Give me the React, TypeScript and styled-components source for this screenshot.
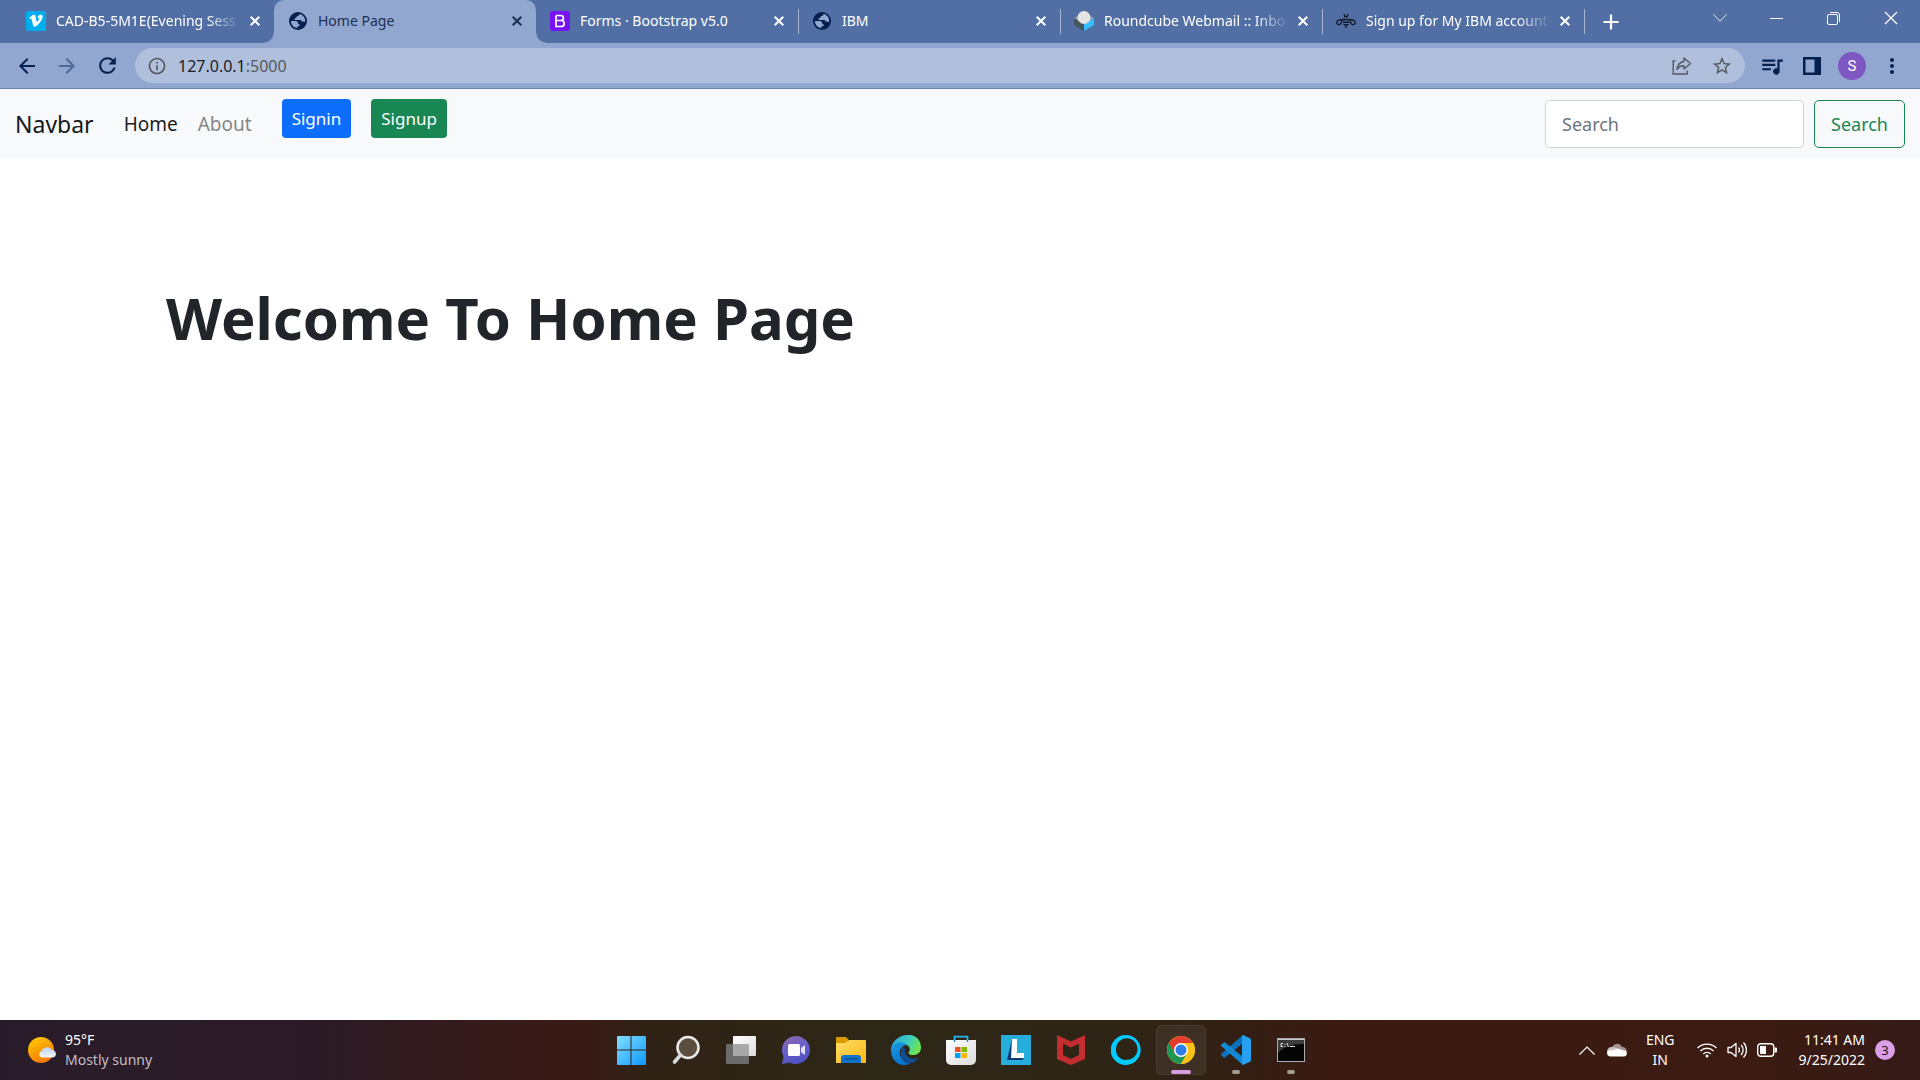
import React from "react";
import styled, { createGlobalStyle } from "styled-components";
import { MdArrowBack, MdArrowForward, MdRefresh, MdInfoOutline, MdStarBorder, MdQueueMusic, MdMoreVert } from "react-icons/md";

const GlobalStyle = createGlobalStyle`
  *, *::before, *::after { box-sizing: border-box; }
  body { margin: 0; background: #fff; }
  body, button, input { font-family: "Noto Sans", "Open Sans", sans-serif; }
  button { border: 0; padding: 0; background: none; color: inherit; cursor: pointer; }
  svg { display: block; flex: none; }
`;

const Screen = styled.div`
  min-height: 100vh;
  display: flex;
  flex-direction: column;
`;

/* ---------- browser ---------- */

const TabStrip = styled.div`
  display: flex;
  align-items: center;
  height: 43px;
  padding-left: 12px;
  background: #516fa4;
  color: #fff;
`;

const Tab = styled.div<{ $active?: boolean; $divider?: boolean }>`
  position: relative;
  flex: 0 1 262px;
  min-width: 0;
  height: 100%;
  display: flex;
  align-items: center;
  gap: 4px;
  padding: 0 9px 1px 14px;
  border-radius: 10px 10px 0 0;
  background: ${(p) => (p.$active ? "#92a7d0" : "transparent")};
  color: ${(p) => (p.$active ? "#1d2f50" : "#fff")};

  &::before,
  &::after {
    content: "";
    position: absolute;
    bottom: 0;
    width: 10px;
    height: 10px;
    display: ${(p) => (p.$active ? "block" : "none")};
  }
  &::before {
    left: -10px;
    background: radial-gradient(circle at 0 0, transparent 9px, #92a7d0 10px);
  }
  &::after {
    right: -10px;
    background: radial-gradient(circle at 100% 0, transparent 9px, #92a7d0 10px);
  }
  ${(p) =>
    p.$divider &&
    `&::after {
      display: block;
      right: -1px;
      bottom: 9px;
      width: 1px;
      height: 25px;
      background: #a5b4d1;
    }`}
`;

const TabTitle = styled.button<{ $fade?: boolean }>`
  flex: 1;
  min-width: 0;
  height: 28px;
  display: flex;
  align-items: center;
  gap: 10px;
  overflow: hidden;
  white-space: nowrap;
  font-size: 14px;
  line-height: 20px;
  mask-image: ${(p) => (p.$fade ? "linear-gradient(90deg, #000 84%, transparent 100%)" : "none")};
`;

const TabClose = styled.button`
  width: 20px;
  height: 20px;
  display: grid;
  place-items: center;
`;

const NewTab = styled.button`
  width: 36px;
  height: 36px;
  margin-left: 9px;
  display: grid;
  place-items: center;
`;

const WindowControls = styled.div`
  align-self: flex-start;
  display: flex;
  height: 36px;
  margin-left: auto;
  padding-right: 1px;
`;

const WindowButton = styled.button`
  width: 57px;
  display: grid;
  place-items: center;
`;

const Toolbar = styled.div`
  display: flex;
  align-items: center;
  height: 46px;
  padding: 0 8px 0 7px;
  background: #92a7d0;
  border-bottom: 1px solid #6a84b5;
  color: #04204f;
`;

const ToolButton = styled.button<{ $dim?: boolean }>`
  width: 40px;
  height: 36px;
  display: grid;
  place-items: center;
  opacity: ${(p) => (p.$dim ? 0.45 : 1)};
`;

const AddressBar = styled.form`
  flex: 1;
  height: 35px;
  margin: 0 7px 0 8px;
  padding: 0 3px 0 12px;
  display: flex;
  align-items: center;
  border-radius: 18px;
  background: #afbfdc;
  color: #56595e;
`;

const Address = styled.label`
  flex: 1;
  display: flex;
  align-items: center;
  gap: 11px;
`;

const Url = styled.span`
  font-size: 16px;
  line-height: 24px;
  b { font-weight: 400; color: #1d2025; }
`;

const Avatar = styled.span`
  width: 28px;
  height: 28px;
  border-radius: 50%;
  background: #7e57c2;
  color: #fff;
  font-family: Roboto, sans-serif;
  font-size: 15px;
  line-height: 28px;
`;

/* ---------- web page ---------- */

const Navbar = styled.nav`
  display: flex;
  align-items: center;
  padding: 10px 15px;
  background: #f8f9fb;
`;

const Brand = styled.a`
  margin-right: 20px;
  color: #17181a;
  font-size: 23px;
  line-height: 34px;
  text-decoration: none;
`;

const NavLink = styled.a<{ $active?: boolean }>`
  padding: 10px;
  color: ${(p) => (p.$active ? "#1b1c1d" : "#858687")};
  font-size: 19px;
  line-height: 30px;
  text-decoration: none;
`;

const AuthButtons = styled.div`
  align-self: flex-start;
  display: flex;
  gap: 20px;
  margin-left: 20px;
`;

const AuthButton = styled.button<{ $tone: string }>`
  height: 39px;
  padding: 0 10px;
  border-radius: 4px;
  background: ${(p) => p.$tone};
  color: #fff;
  font-size: 17px;
`;

const SearchForm = styled.form`
  display: flex;
  gap: 10px;
  margin-left: auto;
`;

const SearchInput = styled.input`
  width: 259px;
  height: 48px;
  padding: 0 16px;
  border: 1px solid #ced4da;
  border-radius: 5px;
  background: #fff;
  font-size: 18px;
  &::placeholder { color: #6c757d; opacity: 1; }
`;

const SearchButton = styled.button`
  height: 48px;
  padding: 0 16px;
  border: 1px solid #198754;
  border-radius: 5px;
  color: #198754;
  font-size: 18px;
`;

const Main = styled.main`
  flex: 1;
  padding: 123px 166px 0;
`;

const Heading = styled.h1`
  margin: 0;
  color: #212529;
  font-size: 58px;
  line-height: 72px;
  font-weight: 700;
`;

/* ---------- taskbar ---------- */

const Taskbar = styled.footer`
  display: grid;
  grid-template-columns: 1fr auto 1fr;
  align-items: center;
  height: 60px;
  background: linear-gradient(90deg, #291c2a 0%, #2b1b26 16%, #3a1a15 30%, #2f2316 34%, #2d2717 46%, #2f2416 60%, #351e14 66%, #3c1a12 70%, #3b1b12 92%, #351a18 100%);
  color: #fff;
  font-size: 14px;
  line-height: 20px;
`;

const Weather = styled.button`
  display: flex;
  align-items: center;
  gap: 8px;
  padding-left: 28px;
  text-align: left;
  font-size: 14px;
  line-height: 20px;
`;

const Lines = styled.span<{ $align?: string }>`
  display: flex;
  flex-direction: column;
  text-align: ${(p) => p.$align || "left"};
`;

const Muted = styled.span`
  color: #c4bec2;
`;

const Apps = styled.div`
  display: flex;
  gap: 5px;
  padding-left: 2px;
`;

const AppButton = styled.button<{ $active?: boolean; $running?: boolean }>`
  position: relative;
  width: 50px;
  height: 50px;
  display: grid;
  place-items: center;
  border-radius: 5px;
  border: 1px solid ${(p) => (p.$active ? "#4a3a2d" : "transparent")};
  background: ${(p) => (p.$active ? "#3e3024" : "transparent")};
  &::after {
    content: "";
    display: ${(p) => (p.$running ? "block" : "none")};
    position: absolute;
    bottom: 0;
    width: ${(p) => (p.$active ? "20px" : "8px")};
    height: 4px;
    border-radius: 2px;
    background: ${(p) => (p.$active ? "#d99be3" : "#a39a94")};
  }
`;

const Tray = styled.div`
  justify-self: end;
  display: flex;
  align-items: center;
  padding-right: 25px;
`;

const TrayButton = styled.button<{ $space?: number }>`
  display: flex;
  align-items: center;
  gap: 10px;
  margin-left: ${(p) => p.$space || 0}px;
  font-size: 14px;
  line-height: 20px;
`;

const Badge = styled.span`
  width: 20px;
  height: 20px;
  border-radius: 50%;
  background: #dc9ee6;
  color: #241420;
  font-size: 13px;
  line-height: 20px;
  text-align: center;
`;

/* ---------- drawings ---------- */

const Cross = ({ size = 10, width = 2 }: { size?: number; width?: number }) => (
  <svg width={size} height={size} viewBox="0 0 10 10" fill="none" stroke="currentColor" strokeWidth={width}>
    <path d="M.7.7l8.6 8.6M9.3.7L.7 9.3" />
  </svg>
);

const Vimeo = () => (
  <svg width="20" height="20" viewBox="0 0 20 20">
    <rect width="20" height="20" rx="2" fill="#00adef" />
    <path fill="#fff" d="M3.2 7.1l.7.9c.6-.4 1-.6 1.2-.4.7.5 1.5 5.3 2.1 6.8.7 1.7 1.9 1.7 3.3.6 2.4-1.9 5.6-5.7 6.1-8.7.4-2.2-.8-2.9-2.3-2.6-1.600.3-2.800 1.500-3.100 3.100 1.600-.6 2.200.2 1.500 1.700-1.300 2.600-2 2.700-2.400.9-.5-1.900-.5-5.300-2-5.700C6.900 3.300 5.300 5.100 3.200 7.100z" />
  </svg>
);

const Globe = () => (
  <svg width="20" height="20" viewBox="0 0 20 20">
    <circle cx="10" cy="10" r="9" fill="#04204f" />
    <path fill="#92a7d0" d="M11.500 3C11.500 4.500 10.500 5 9 5c-.3 1.600-1 2.200-2.300 2.200V9h5.600c.9 0 1.200.6 1.200 1.500h1.300c1 0 1.700.5 2.200.5C17.800 7 15 3.500 11.500 3z" />
    <path fill="#92a7d0" d="M3 10h4.500c1.800 0 2.700 1 2.700 2.500v.8h1.500v1.700l-2.200.3V17C5.500 16.700 3 13.800 3 10z" />
  </svg>
);

const Bootstrap = () => (
  <svg width="20" height="20" viewBox="0 0 20 20">
    <rect width="20" height="20" rx="2" fill="#7813f8" />
    <path d="M6 4.500h4.600c3.800 0 3.800 5 0 5H6m0 0h5.200c4 0 4 6 0 6H6v-11" fill="none" stroke="#fff" strokeWidth="1.700" />
  </svg>
);

const Roundcube = () => (
  <svg width="20" height="20" viewBox="0 0 20 20">
    <path d="M0 7l10 6v7L0 14z" fill="#45555c" />
    <path d="M20 7l-10 6v7l10-6z" fill="#37beff" />
    <path d="M0 7l4-2 12 0 4 2-10 6z" fill="#8fa0ac" />
    <ellipse cx="10" cy="6.500" rx="6.500" ry="6.500" fill="#e5e5e5" />
    <path d="M4 8.500c3 4.800 9 4.800 12 0l-6 4.500z" fill="#d2d2d2" />
  </svg>
);

const Bee = () => (
  <svg width="20" height="20" viewBox="0 0 20 20" fill="none" stroke="#111722">
    <path strokeWidth="1.600" d="M8 5.500h4M6.500 8.500h7M7 11.200h6M7.500 13.700h5M9 16h2" />
    <path strokeWidth="1.300" d="M8.300 4.800V3M11.700 4.800V3M6.500 9C4 8.200.8 9.500.7 11.500c0 2.500 3.200 2.600 4.300.8zM13.500 9c2.500-.8 5.700.5 5.800 2.500 0 2.500-3.200 2.600-4.300.8z" />
  </svg>
);

const Share = () => (
  <svg width="20" height="20" viewBox="0 0 20 20" fill="none" stroke="currentColor" strokeWidth="1.400">
    <path d="M3.500 5H1.200v13h14v-3.500" />
    <path d="M12 2l6.500 5.500L12 13V9.800c-3.500 0-5.500 1.200-7 3.700.5-4.200 3-7.500 7-8z" strokeLinejoin="round" />
  </svg>
);

const SunCloud = () => (
  <svg width="29" height="28" viewBox="0 0 29 28">
    <defs>
      <linearGradient id="sun" x1="0" y1="0" x2="0.5" y2="1"><stop stopColor="#ffd000" /><stop offset="1" stopColor="#f67a08" /></linearGradient>
      <linearGradient id="cloud" x1="0" y1="0" x2="0" y2="1"><stop stopColor="#b9d3f3" /><stop offset="1" stopColor="#f2f6fc" /></linearGradient>
    </defs>
    <circle cx="13" cy="14" r="13" fill="url(#sun)" />
    <path d="M14 21.500a3.300 3.300 0 010-6.500c1-4.500 8-5 10-1 5 0 5.500 7.500 0 7.500z" fill="url(#cloud)" />
  </svg>
);

const Start = () => (
  <svg width="30" height="30" viewBox="0 0 30 30">
    <defs><linearGradient id="win" x1="0" y1="0" x2="1" y2="1"><stop stopColor="#84ddff" /><stop offset="1" stopColor="#0d99ff" /></linearGradient></defs>
    <path fill="url(#win)" d="M2 1h12.500v13.500H1V2a1 1 0 011-1zM15.500 1H29a1 1 0 011 1v12.500H15.500zM1 15.500h13.500V30H2a1 1 0 01-1-1zM15.500 15.500H30V29a1 1 0 01-1 1H15.500z" />
  </svg>
);

const SearchGlass = () => (
  <svg width="30" height="30" viewBox="0 0 30 30">
    <circle cx="17" cy="12.500" r="10.500" fill="#5b4d3e" stroke="#e6e8ea" strokeWidth="2.600" />
    <path d="M9.500 20l-6 7" stroke="#d8dbde" strokeWidth="3.600" strokeLinecap="round" />
  </svg>
);

const TaskView = () => (
  <svg width="30" height="30" viewBox="0 0 30 30">
    <defs><linearGradient id="tvw" x1="0" y1="0" x2="1" y2="1"><stop stopColor="#fff" /><stop offset="1" stopColor="#dcdcdc" /></linearGradient></defs>
    <rect x="7" y="1" width="23" height="20" rx="1" fill="url(#tvw)" />
    <rect x="0" y="9" width="23" height="20" rx="1" fill="#6b6b6b" />
    <path d="M7 9h16v12H7z" fill="#a8a8a8" />
  </svg>
);

const Chat = () => (
  <svg width="30" height="30" viewBox="0 0 30 30">
    <defs><linearGradient id="chat" x1="0" y1="0" x2="0.4" y2="1"><stop stopColor="#93649f" /><stop offset="0.5" stopColor="#6b62c9" /><stop offset="1" stopColor="#4f52c4" /></linearGradient></defs>
    <path d="M15 1a14 14 0 11-6 26.700L1 29l1.500-7.500A14 14 0 0115 1z" fill="url(#chat)" />
    <rect x="7" y="9" width="12" height="12" rx="1.500" fill="#fff" />
    <path d="M20 13l4-3v10l-4-3z" fill="#e6e4fb" />
  </svg>
);

const Folder = () => (
  <svg width="30" height="30" viewBox="0 0 30 30">
    <defs><linearGradient id="fold" x1="0" y1="0" x2="1" y2="1"><stop stopColor="#ffdd6c" /><stop offset="1" stopColor="#f9b80e" /></linearGradient></defs>
    <path d="M1 2h9l3 3h-1v5H0V3a1 1 0 011-1z" fill="#dc9a05" />
    <path d="M0 8h9l4-3h16a1 1 0 011 1v22H0z" fill="url(#fold)" />
    <path d="M5 28v-5a3 3 0 013-3h14a3 3 0 013 3v5z" fill="#1173ca" />
    <path d="M8.500 24h13" stroke="#0b4c94" strokeWidth="1.300" />
  </svg>
);

const Edge = () => (
  <svg width="30" height="30" viewBox="0 0 30 30">
    <defs>
      <linearGradient id="edgeTop" x1="0" y1="0" x2="1" y2="0.4"><stop stopColor="#26a3dd" /><stop offset="0.6" stopColor="#3bccbd" /><stop offset="1" stopColor="#6be555" /></linearGradient>
      <linearGradient id="edgeBody" x1="0" y1="0" x2="0.6" y2="1"><stop stopColor="#1b9bde" /><stop offset="1" stopColor="#0870cf" /></linearGradient>
    </defs>
    <path d="M0 15C.5-2 29-7 30 12c0 6-4 8.500-9 8-4-.4-4-2-2.600-4C21 10 11 7 6 11c-3 2-5 3-6 4z" fill="url(#edgeTop)" />
    <path d="M0 15C1 7 11 5 16 10c-5 0-8 5-7 10 1 4 5 8 10 8.800C9 33 0 26 0 15z" fill="url(#edgeBody)" />
    <path d="M13 12c-4 3-4.500 9-.5 13.500 4 4.500 11 3.500 15.500-3-5 2.600-11 1.200-13-3-1.300-2.500-.5-5-2-7.500z" fill="#0f4f98" />
  </svg>
);

const Store = () => (
  <svg width="30" height="30" viewBox="0 0 30 30">
    <defs><linearGradient id="bag" x1="0" y1="0" x2="1" y2="1"><stop stopColor="#fff" /><stop offset="1" stopColor="#dcdcdc" /></linearGradient></defs>
    <path d="M8.500 6V1.700h13V6" fill="none" stroke="#27b8ef" strokeWidth="1.700" />
    <path d="M0 5h30v20a5 5 0 01-5 5H5a5 5 0 01-5-5z" fill="url(#bag)" />
    <path d="M8.500 5v2M21.500 5v2" stroke="#1b8fd0" strokeWidth="1.500" />
    <path d="M9 12h5.500v5H9z" fill="#f25022" /><path d="M15.500 12H21v5h-5.500z" fill="#7fba00" />
    <path d="M9 18h5.500v5H9z" fill="#00a4ef" /><path d="M15.500 18H21v5h-5.500z" fill="#ffb900" />
  </svg>
);

const Lenovo = () => (
  <svg width="30" height="30" viewBox="0 0 30 30">
    <path d="M0 0h30v30H0z" fill="#27addb" />
    <path d="M11 4L6 25h16l1-3-11-1z" fill="#0b3a78" />
    <path d="M11 4h5v14h7v5H10z" fill="#fff" />
  </svg>
);

const McAfee = () => (
  <svg width="28" height="30" viewBox="0 0 28 30">
    <path fillRule="evenodd" d="M0 0l14 6.500L28 0v24l-14 6-14-6zM6 8.500V20l8 4 8-4V8.500l-8 4z" fill="#c42e30" />
  </svg>
);

const Alexa = () => (
  <svg width="30" height="30" viewBox="0 0 30 30">
    <path fillRule="evenodd" d="M15 0a15 15 0 11-2 29.900V25.800c0-.8.500-1 1.200-1.100A10.800 10.800 0 105 15c0 4.500 2.500 8 7 9.600.8.300 1 .8 1 1.500v3.800A15 15 0 0115 0z" fill="#00caff" />
  </svg>
);

const Chrome = () => (
  <svg width="28" height="28" viewBox="0 0 28 28">
    <circle cx="14" cy="14" r="14" fill="#fbc116" />
    <path d="M1.900 7A14 14 0 0126.100 7H14z" fill="#e33b2e" />
    <path d="M1.900 7A14 14 0 0014 28l6-10.500L14 14 8 17.500z" fill="#219653" />
    <path d="M26.100 7H14l6 10.500L14 28A14 14 0 0026.100 7z" fill="#fbc116" />
    <path d="M1.900 7L8 17.500 14 14V7z" fill="#e33b2e" />
    <path d="M1.900 7L8 17.500 7 19 1 10z" fill="#219653" />
    <circle cx="14" cy="14" r="7" fill="#fff" />
    <circle cx="14" cy="14" r="5.500" fill="#2f7de9" />
  </svg>
);

const VSCode = () => (
  <svg width="30" height="30" viewBox="0 0 30 30">
    <path d="M22 0v8L3.500 23 .3 20.500c-.5-.6-.4-1.200.1-1.700z" fill="#0b72bd" />
    <path d="M22 30v-8L3.500 7 .3 9.500c-.5.6-.4 1.200.1 1.700z" fill="#1287d3" />
    <path d="M22 0l7 3.200a2 2 0 011 1.800v20a2 2 0 01-1 1.800L22 30c-.6-.4-1-1-1-2V2c0-1 .4-1.600 1-2z" fill="#27a0f0" />
  </svg>
);

const Terminal = () => (
  <svg width="28" height="24" viewBox="0 0 28 24">
    <rect x="0.5" y="0.5" width="27" height="23" fill="#050505" stroke="#a9adb1" />
    <path d="M1 1h26v5C15 6 6 9 1 15z" fill="#3b3b3b" />
    <path d="M1 1.500h26" stroke="#c5c9cd" />
    <path d="M6 5.500H4v3h2M8 6v.8M8 8v.8M10 5l1.500 4M13 8.500h5" stroke="#ddd" fill="none" />
  </svg>
);

const OneDrive = () => (
  <svg width="20" height="14" viewBox="0 0 20 14">
    <path d="M4 9C4 1 12-2 15 4c3 0 5 2 5 5z" fill="#a3948f" />
    <path d="M0 9c0-3 2-5 5-5 3 0 8 2 12 6z" fill="#cfc7c4" />
    <path d="M3 13.500c-4-.5-4-6 0-6 3 0 5-.5 8-2 3 1 5 2 6.500 2 3.500 1 3 6-.5 6z" fill="#fff" />
  </svg>
);

const Wifi = () => (
  <svg width="20" height="16" viewBox="0 0 20 16" fill="none" stroke="#fff" strokeWidth="1.400">
    <path d="M.6 6a13.300 13.300 0 0118.800 0M3.500 9a9.200 9.200 0 0113 0M6.300 11.900a5.200 5.200 0 017.400 0" />
    <circle cx="10" cy="14" r="1.500" fill="#fff" stroke="none" />
  </svg>
);

const Volume = () => (
  <svg width="20" height="18" viewBox="0 0 20 18" fill="none" stroke="#fff" strokeWidth="1.300">
    <path d="M1 6.500h3L9 2.500v13l-5-4H1zM11.500 6.500a4 4 0 010 5M14 4a7 7 0 010 10M16.500 1.500a11 11 0 010 15" strokeLinejoin="round" />
  </svg>
);

const Battery = () => (
  <svg width="20" height="14" viewBox="0 0 20 14">
    <rect x="0.7" y="0.7" width="16" height="12.6" rx="3" fill="none" stroke="#fff" strokeWidth="1.400" />
    <path d="M3 3h6v8H4a1 1 0 01-1-1z" fill="#fff" />
    <path d="M17.500 4.500h1.500a1 1 0 011 1v3a1 1 0 01-1 1h-1.500z" fill="#fff" />
  </svg>
);

const tabs = [
  { title: "CAD-B5-5M1E(Evening Sess", icon: <Vimeo />, fade: true },
  { title: "Home Page", icon: <Globe />, active: true },
  { title: "Forms · Bootstrap v5.0", icon: <Bootstrap />, divider: true },
  { title: "IBM", icon: <Globe />, divider: true },
  { title: "Roundcube Webmail :: Inbo", icon: <Roundcube />, fade: true, divider: true },
  { title: "Sign up for My IBM account", icon: <Bee />, fade: true, divider: true },
];

const apps = [
  { name: "Start", icon: <Start /> },
  { name: "Search", icon: <SearchGlass /> },
  { name: "Task view", icon: <TaskView /> },
  { name: "Chat", icon: <Chat /> },
  { name: "File Explorer", icon: <Folder /> },
  { name: "Edge", icon: <Edge /> },
  { name: "Store", icon: <Store /> },
  { name: "Lenovo Vantage", icon: <Lenovo /> },
  { name: "McAfee", icon: <McAfee /> },
  { name: "Alexa", icon: <Alexa /> },
  { name: "Chrome", icon: <Chrome />, running: true, active: true },
  { name: "Visual Studio Code", icon: <VSCode />, running: true },
  { name: "Command Prompt", icon: <Terminal />, running: true },
];

export default function App() {
  return (
    <Screen>
      <GlobalStyle />
      <TabStrip>
        {tabs.map((t) => (
          <Tab key={t.title} $active={t.active} $divider={t.divider}>
            <TabTitle $fade={t.fade}>
              {t.icon}
              {t.title}
            </TabTitle>
            <TabClose aria-label="Close tab"><Cross /></TabClose>
          </Tab>
        ))}
        <NewTab aria-label="New tab">
          <svg width="16" height="16" viewBox="0 0 16 16" stroke="#fff" strokeWidth="2.200"><path d="M8 .5v15M.5 8h15" /></svg>
        </NewTab>
        <WindowControls>
          <WindowButton aria-label="Search tabs">
            <svg width="14" height="8" viewBox="0 0 14 8" fill="none" stroke="#e3e9f3"><path d="M.5.5L7 7.200 13.500.5" /></svg>
          </WindowButton>
          <WindowButton aria-label="Minimize">
            <svg width="13" height="1" viewBox="0 0 13 1"><path d="M0 0h13v1H0z" fill="#fff" /></svg>
          </WindowButton>
          <WindowButton aria-label="Restore">
            <svg width="13" height="13" viewBox="0 0 13 13" fill="none" stroke="#fff"><rect x="0.5" y="2.5" width="10" height="10" rx="1.5" /><path d="M3 .5h7a2.500 2.500 0 012.500 2.500v7" /></svg>
          </WindowButton>
          <WindowButton aria-label="Close"><Cross size={14} width={0.9} /></WindowButton>
        </WindowControls>
      </TabStrip>

      <Toolbar>
        <ToolButton aria-label="Back"><MdArrowBack size={24} /></ToolButton>
        <ToolButton aria-label="Forward" $dim><MdArrowForward size={24} /></ToolButton>
        <ToolButton aria-label="Reload"><MdRefresh size={25} /></ToolButton>
        <AddressBar onSubmit={(e) => e.preventDefault()}>
          <Address>
            <MdInfoOutline size={20} />
            <Url><b>127.0.0.1</b>:5000</Url>
          </Address>
          <ToolButton type="button" aria-label="Share"><Share /></ToolButton>
          <ToolButton type="button" aria-label="Bookmark"><MdStarBorder size={22} /></ToolButton>
        </AddressBar>
        <ToolButton aria-label="Media"><MdQueueMusic size={26} /></ToolButton>
        <ToolButton aria-label="Side panel">
          <svg width="18" height="18" viewBox="0 0 18 18"><path fillRule="evenodd" d="M0 0h18v18H0zM2.500 2.500v13h9v-13z" fill="#04204f" /></svg>
        </ToolButton>
        <ToolButton aria-label="Profile"><Avatar>S</Avatar></ToolButton>
        <ToolButton aria-label="Menu"><MdMoreVert size={24} /></ToolButton>
      </Toolbar>

      <Navbar>
        <Brand href="#">Navbar</Brand>
        <NavLink href="#" $active>Home</NavLink>
        <NavLink href="#">About</NavLink>
        <AuthButtons>
          <AuthButton $tone="#0d6efd">Signin</AuthButton>
          <AuthButton $tone="#198754">Signup</AuthButton>
        </AuthButtons>
        <SearchForm onSubmit={(e) => e.preventDefault()}>
          <SearchInput type="search" placeholder="Search" aria-label="Search" />
          <SearchButton type="submit">Search</SearchButton>
        </SearchForm>
      </Navbar>

      <Main>
        <Heading>Welcome To Home Page</Heading>
      </Main>

      <Taskbar>
        <Weather>
          <SunCloud />
          <Lines><span>95°F</span><Muted>Mostly sunny</Muted></Lines>
        </Weather>
        <Apps>
          {apps.map((a) => (
            <AppButton key={a.name} aria-label={a.name} $active={a.active} $running={a.running}>{a.icon}</AppButton>
          ))}
        </Apps>
        <Tray>
          <TrayButton aria-label="Show hidden icons">
            <svg width="16" height="9" viewBox="0 0 16 9" fill="none" stroke="#fff" strokeWidth="1.200"><path d="M.5 8.500L8 1l7.500 7.500" /></svg>
          </TrayButton>
          <TrayButton $space={12} aria-label="OneDrive"><OneDrive /></TrayButton>
          <TrayButton $space={19}><Lines $align="center"><span>ENG</span><span>IN</span></Lines></TrayButton>
          <TrayButton $space={22} aria-label="Network, sound and battery"><Wifi /><Volume /><Battery /></TrayButton>
          <TrayButton $space={22}>
            <Lines $align="right"><span>11:41 AM</span><span>9/25/2022</span></Lines>
            <Badge>3</Badge>
          </TrayButton>
        </Tray>
      </Taskbar>
    </Screen>
  );
}
